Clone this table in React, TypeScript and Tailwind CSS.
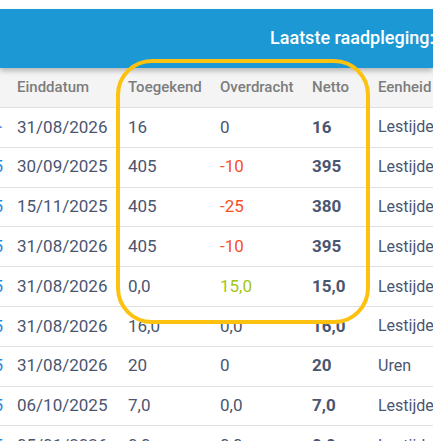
import React from "react";

type Row = {
  end: string;
  granted: string;
  transfer: string;
  net: string;
  unit: string;
  tone?: "neg" | "pos";
};

// rijen van de tabel
const rows: Row[] = [
  { end: "31/08/2026", granted: "16", transfer: "0", net: "16", unit: "Lestijden" },
  { end: "30/09/2025", granted: "405", transfer: "-10", net: "395", unit: "Lestijden", tone: "neg" },
  { end: "15/11/2025", granted: "405", transfer: "-25", net: "380", unit: "Lestijden", tone: "neg" },
  { end: "31/08/2026", granted: "405", transfer: "-10", net: "395", unit: "Lestijden", tone: "neg" },
  { end: "31/08/2026", granted: "0,0", transfer: "15,0", net: "15,0", unit: "Lestijden", tone: "pos" },
  { end: "31/08/2026", granted: "16,0", transfer: "0,0", net: "16,0", unit: "Lestijden" },
  { end: "31/08/2026", granted: "20", transfer: "0", net: "20", unit: "Uren" },
  { end: "06/10/2025", granted: "7,0", transfer: "0,0", net: "7,0", unit: "Lestijden" },
  { end: "05/01/2026", granted: "0,0", transfer: "0,0", net: "0,0", unit: "Lestijden" },
];

function App() {
  return (
    <div
      className="relative w-[433px] h-[441px] overflow-hidden bg-white"
      style={{ fontFamily: "Roboto, 'Liberation Sans', sans-serif" }}
    >
      {/* BALK */}
      <div className="mt-[9px] h-[59px] bg-[#1c98d4] flex items-center shadow-[0_3px_5px_rgba(0,0,0,0.25)] relative z-10 whitespace-nowrap">
        <span className="text-white text-[18px] font-medium pl-[270px] pb-[2px]">
          Laatste raadpleging:
        </span>
      </div>

      {/* KOP */}
      <div className="flex h-[40px] items-center bg-[#f4f4f4] border-b border-[#e0e0e0] text-[15px] font-medium text-[#7d7d7d] whitespace-nowrap">
        <div className="w-[17px] shrink-0" />
        <div className="w-[111px] shrink-0">Einddatum</div>
        <div className="w-[92px] shrink-0">Toegekend</div>
        <div className="w-[92px] shrink-0">Overdracht</div>
        <div className="w-[66px] shrink-0">Netto</div>
        <div className="shrink-0">Eenheid</div>
      </div>

      {/* RIJEN */}
      {rows.map((r, i) => (
        <div
          key={i}
          className="flex h-[39.8px] items-center border-b border-[#e0e0e0] text-[17px] text-[#4a5670] whitespace-nowrap"
        >
          <div className="w-[17px] shrink-0 pr-[14px] flex justify-end overflow-hidden text-[#1e88e5]">
            <span>{i === 0 ? "·" : "5"}</span>
          </div>
          <div className="w-[111px] shrink-0">{r.end}</div>
          <div className="w-[92px] shrink-0">{r.granted}</div>
          <div
            className={`w-[92px] shrink-0 ${
              r.tone === "neg" ? "text-[#f4501e]" : r.tone === "pos" ? "text-[#a2c614]" : ""
            }`}
          >
            {r.transfer}
          </div>
          <div className="w-[66px] shrink-0 font-bold">{r.net}</div>
          <div className="shrink-0 text-[16px]">{r.unit}</div>
        </div>
      ))}

      {/* MARKERING */}
      <div className="absolute left-[116px] top-[59px] w-[254px] h-[265px] rounded-[36px] border-[4px] border-[#fdc20f] z-20 pointer-events-none" />
    </div>
  );
}

export default App;
